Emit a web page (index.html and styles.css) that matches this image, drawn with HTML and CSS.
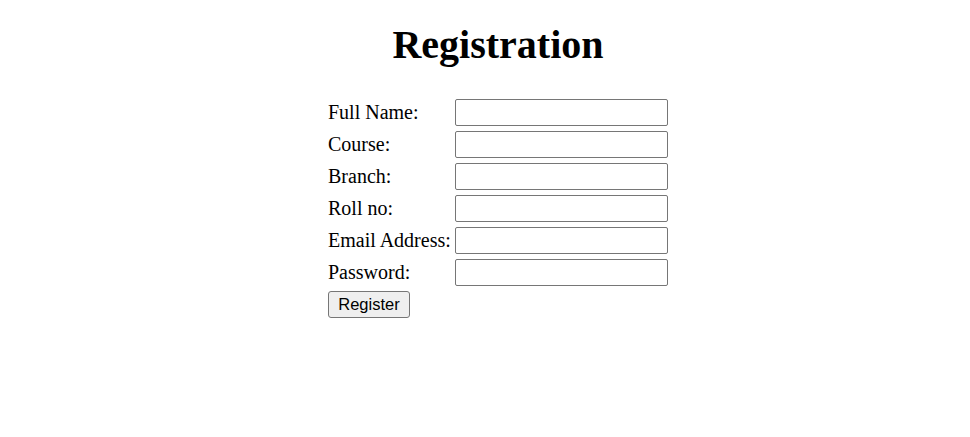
FILE: index.html
```html
<!DOCTYPE html>
<html>
<head>
<meta charset="utf-8">
<title>Registration</title>
<link rel="stylesheet" href="styles.css">
</head>
<body>
<div class="page">
  <h1 class="title">Registration</h1>
  <form class="form">
    <label class="label" for="name">Full Name:</label><input class="field" id="name" type="text">
    <label class="label" for="course">Course:</label><input class="field" id="course" type="text">
    <label class="label" for="branch">Branch:</label><input class="field" id="branch" type="text">
    <label class="label" for="roll">Roll no:</label><input class="field" id="roll" type="text">
    <label class="label" for="email">Email Address:</label><input class="field" id="email" type="text">
    <label class="label" for="pass">Password:</label><input class="field" id="pass" type="password">
    <div class="actions"><button class="btn" type="button">Register</button></div>
  </form>
</div>
</body>
</html>
```
FILE: styles.css
```css
html, body {
  margin: 0;
  padding: 0;
  background: #ffffff;
}
body {
  font-family: "Liberation Serif", "Times New Roman", serif;
  color: #000;
}
.page {
  padding-left: 26px;
  display: flex;
  flex-direction: column;
  align-items: center;
}
.title {
  font-size: 40px;
  line-height: 46px;
  font-weight: bold;
  margin: 22px 0 0 0;
  text-align: center;
}
.form {
  margin-top: 31px;
  display: grid;
  grid-template-columns: 127px 213px;
  grid-auto-rows: 27px;
  row-gap: 5px;
  align-items: center;
}
.label {
  font-size: 20px;
  line-height: 23px;
  white-space: nowrap;
}
.field {
  box-sizing: border-box;
  width: 213px;
  height: 27px;
  margin: 0;
  border: 1px solid #767676;
  border-radius: 2px;
  background: #fff;
  font-size: 16px;
  padding: 1px 2px;
}
.actions {
  grid-column: 1 / 3;
}
.btn {
  box-sizing: border-box;
  width: 82px;
  height: 27px;
  margin: 0;
  padding: 0;
  border: 1px solid #767676;
  border-radius: 3px;
  background: #efefef;
  font-family: "Liberation Sans", Arial, sans-serif;
  font-size: 16.5px;
  color: #000;
}
```
